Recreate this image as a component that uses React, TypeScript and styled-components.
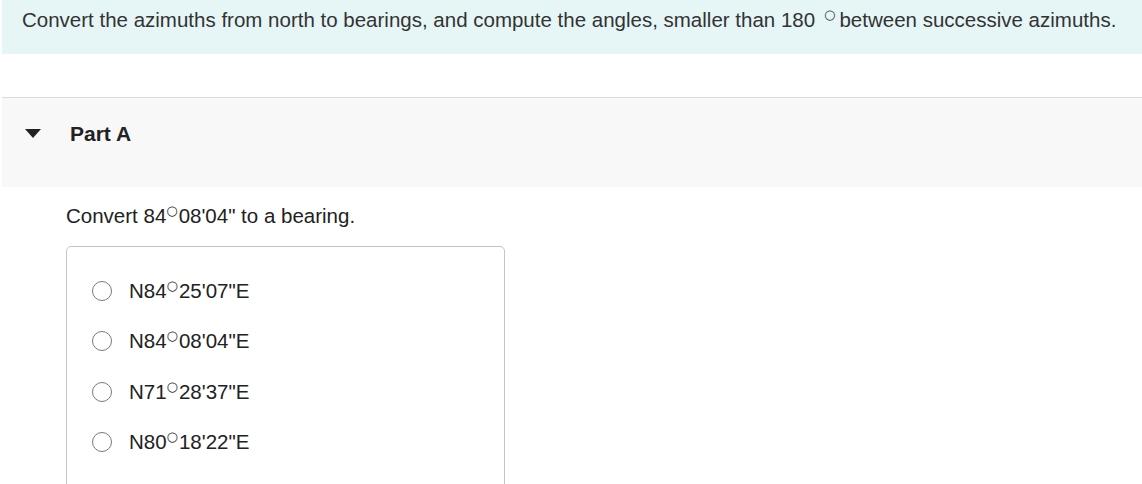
import styled, { createGlobalStyle } from "styled-components";

const GlobalStyle = createGlobalStyle`
	body {
		margin: 0;
		background: #ffffff;
		font-family: "Liberation Sans", Arial, sans-serif;
		color: #333333;
	}
`;

const Page = styled.div`
	display: flex;
	flex-direction: column;
	width: 1142px;
`;

const Intro = styled.div`
	margin-left: 2px;
	height: 54px;
	box-sizing: border-box;
	padding: 8px 0 0 20px;
	background-color: #e6f6f6;
	font-size: 20.5px;
	line-height: 24px;
	white-space: nowrap;
`;

const PartHeader = styled.div`
	margin: 43px 0 0 2px;
	height: 90px;
	box-sizing: border-box;
	border-top: 1px solid #dddddd;
	background-color: #f8f8f8;
	display: flex;
	align-items: center;
	padding: 0 0 18px 23px;
`;

const Caret = styled.span`
	width: 0;
	height: 0;
	border-left: 8px solid transparent;
	border-right: 8px solid transparent;
	border-top: 9px solid #222222;
	margin-right: 29px;
`;

const PartTitle = styled.span`
	font-size: 21px;
	font-weight: bold;
	color: #222222;
`;

const Body = styled.div`
	padding: 17px 0 0 66px;
	display: flex;
	flex-direction: column;
`;

const Prompt = styled.div`
	font-size: 20.5px;
	line-height: 24px;
	color: #222222;
`;

const Choices = styled.div`
	margin-top: 18px;
	width: 439px;
	height: 260px;
	box-sizing: border-box;
	border: 1px solid #c4c4c4;
	border-radius: 5px;
	padding: 34px 0 0 25px;
	display: flex;
	flex-direction: column;
	gap: 30.4px;
`;

const Choice = styled.label`
	display: flex;
	align-items: center;
	gap: 17px;
	height: 20px;
	font-size: 20.5px;
	color: #222222;
`;

const Radio = styled.span`
	width: 20px;
	height: 20px;
	box-sizing: border-box;
	border: 1px solid #7a7a7a;
	border-radius: 50%;
	background: #ffffff;
	flex-shrink: 0;
`;

const Deg = styled.span<{ spaced?: boolean }>`
	font-family: "DejaVu Sans", sans-serif;
	font-size: 13px;
	line-height: 1;
	position: relative;
	top: -8px;
	margin: ${(props) => (props.spaced ? "0 4px 0 9px" : "0 1px 0 0")};
`;

const options = [
	["N84", "25'07\"E"],
	["N84", "08'04\"E"],
	["N71", "28'37\"E"],
	["N80", "18'22\"E"],
];

function App() {
	return (
		<Page>
			<GlobalStyle />
			<Intro>
				Convert the azimuths from north to bearings, and compute the angles,
				smaller than 180<Deg spaced>○</Deg>between successive azimuths.
			</Intro>
			<PartHeader>
				<Caret />
				<PartTitle>Part A</PartTitle>
			</PartHeader>
			<Body>
				<Prompt>
					Convert 84<Deg>○</Deg>08'04" to a bearing.
				</Prompt>
				<Choices>
					{options.map(([a, b]) => (
						<Choice key={a + b}>
							<Radio />
							<span>
								{a}
								<Deg>○</Deg>
								{b}
							</span>
						</Choice>
					))}
				</Choices>
			</Body>
		</Page>
	);
}

export default App;
